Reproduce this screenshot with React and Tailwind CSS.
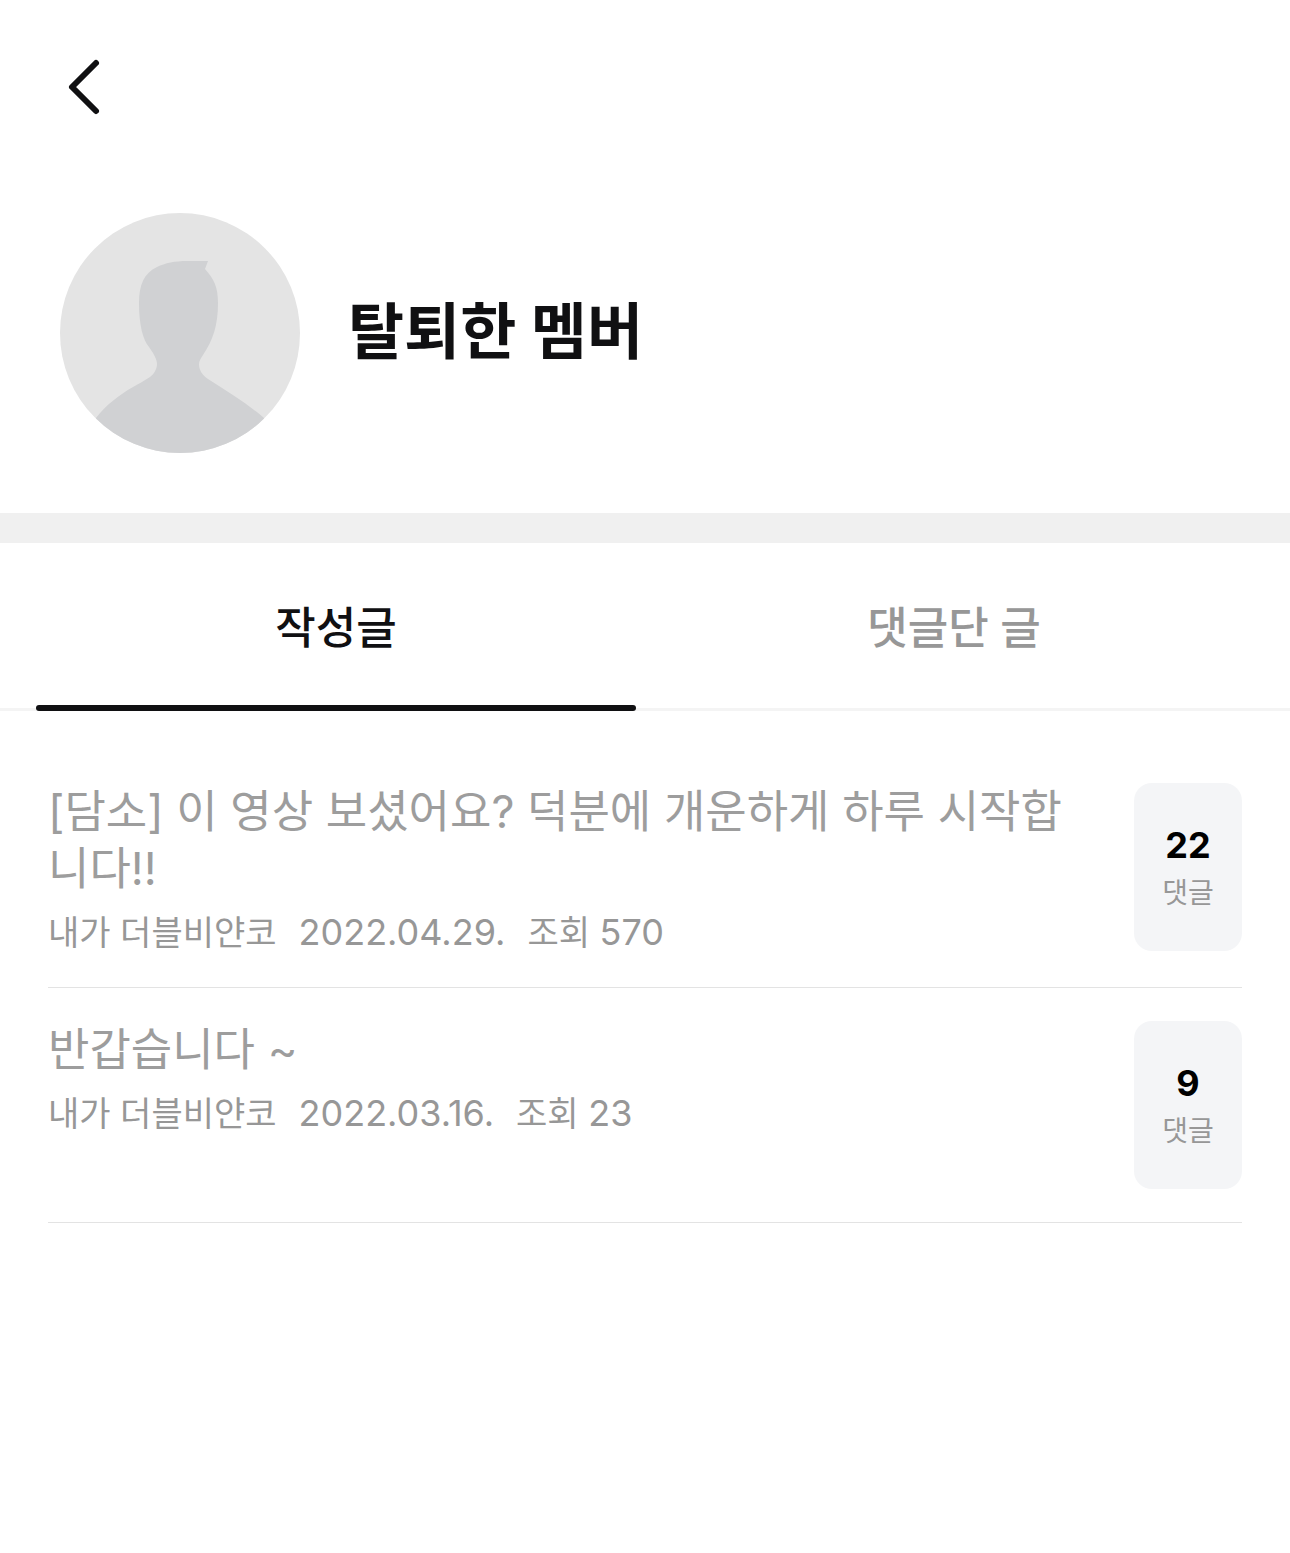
import { useState } from "react";

const tabs = [
  { id: "posts", label: "작성글" },
  { id: "commented", label: "댓글단 글" },
];

const articles = [
  {
    id: 1,
    title: "[담소] 이 영상 보셨어요? 덕분에 개운하게 하루 시작합니다!!",
    writer: "내가 더블비얀코",
    date: "2022.04.29.",
    views: 570,
    comments: 22,
  },
  {
    id: 2,
    title: "반갑습니다 ~",
    writer: "내가 더블비얀코",
    date: "2022.03.16.",
    views: 23,
    comments: 9,
  },
];

const Avatar = () => {
  return (
    <svg
      className="size-60 shrink-0 rounded-full"
      viewBox="0 0 240 240"
      role="img"
      aria-label="프로필 이미지"
    >
      <rect width="240" height="240" fill="#e4e4e4" />
      <path
        d="M148 48H127C115 48 105 50 97 54C84 60 79 72 79 90C79 112 83 127 89 134L93 140C95 144 97 147 97 151C97 156 94 161 90 164C84 168 78 171 73 174C59 182 46 192 36 205V240H204V205C188 191 168 179 148 166C142 162 139 157 139 151C139 148 141 145 143 142C153 127 158 112 158 90C158 74 154 66 145 56Z"
        fill="#d0d1d3"
      />
    </svg>
  );
};

const Article = ({ article }) => {
  return (
    <li className="flex items-start gap-9 border-b border-[#e3e3e3] py-[33px]">
      <a href="#" className="min-w-0 flex-1 text-[#9d9d9d]">
        <strong className="block break-all text-[45px] leading-[57px] font-normal">
          {article.title}
        </strong>
        <span className="mt-[14px] flex h-[43px] items-baseline gap-[22px] text-[34px] leading-[42px] text-[#979797]">
          <span>{article.writer}</span>
          <span className="text-[36px]">{article.date}</span>
          <span>
            조회 <span className="text-[36px]">{article.views}</span>
          </span>
        </span>
      </a>
      <a
        href="#"
        className="flex h-42 w-27 shrink-0 flex-col items-center justify-center rounded-[18px] bg-[#f4f5f7] pb-[2px]"
      >
        <em className="text-[36px] leading-[54px] font-bold text-black not-italic">
          {article.comments}
        </em>
        <span className="text-[28px] leading-[42px] text-[#979797]">댓글</span>
      </a>
    </li>
  );
};

const App = () => {
  const [active, setActive] = useState("posts");

  return (
    <div className="bg-white font-['Inter','Noto_Sans_CJK_KR',sans-serif] text-[#101012]">
      <header className="px-15 pt-[51px]">
        <button type="button" aria-label="뒤로" className="block">
          <svg width="48" height="72" viewBox="0 0 48 72" fill="none">
            <path
              d="M36 12L12 36L36 60"
              stroke="#101012"
              strokeWidth="6"
              strokeLinecap="round"
              strokeLinejoin="round"
            />
          </svg>
        </button>
      </header>

      {/* Profile */}
      <section className="flex items-center gap-12 border-b-30 border-[#f0f0f0] px-15 pt-[90px] pb-15">
        <Avatar />
        <h1 className="pb-[2px] text-[61px] leading-[72px] font-bold">
          탈퇴한 멤버
        </h1>
      </section>

      <nav
        role="tablist"
        className="flex gap-[18px] px-9 shadow-[inset_0_-3px_0_#f4f4f4]"
      >
        {tabs.map((tab) => (
          <button
            key={tab.id}
            type="button"
            role="tab"
            aria-selected={active === tab.id}
            onClick={() => setActive(tab.id)}
            className={
              active === tab.id
                ? "flex h-42 flex-1 flex-col text-[44px] font-medium text-[#101012]"
                : "flex h-42 flex-1 flex-col text-[44px] font-medium text-[#979797]"
            }
          >
            <span className="flex w-full flex-1 items-center justify-center pt-2">
              {tab.label}
            </span>
            <span
              className={
                active === tab.id
                  ? "h-[6px] w-full rounded-full bg-[#101012]"
                  : "h-[6px] w-full"
              }
            />
          </button>
        ))}
      </nav>

      <ul className="px-12 pt-[39px]">
        {articles.map((article) => (
          <Article key={article.id} article={article} />
        ))}
      </ul>
    </div>
  );
};

export default App;
